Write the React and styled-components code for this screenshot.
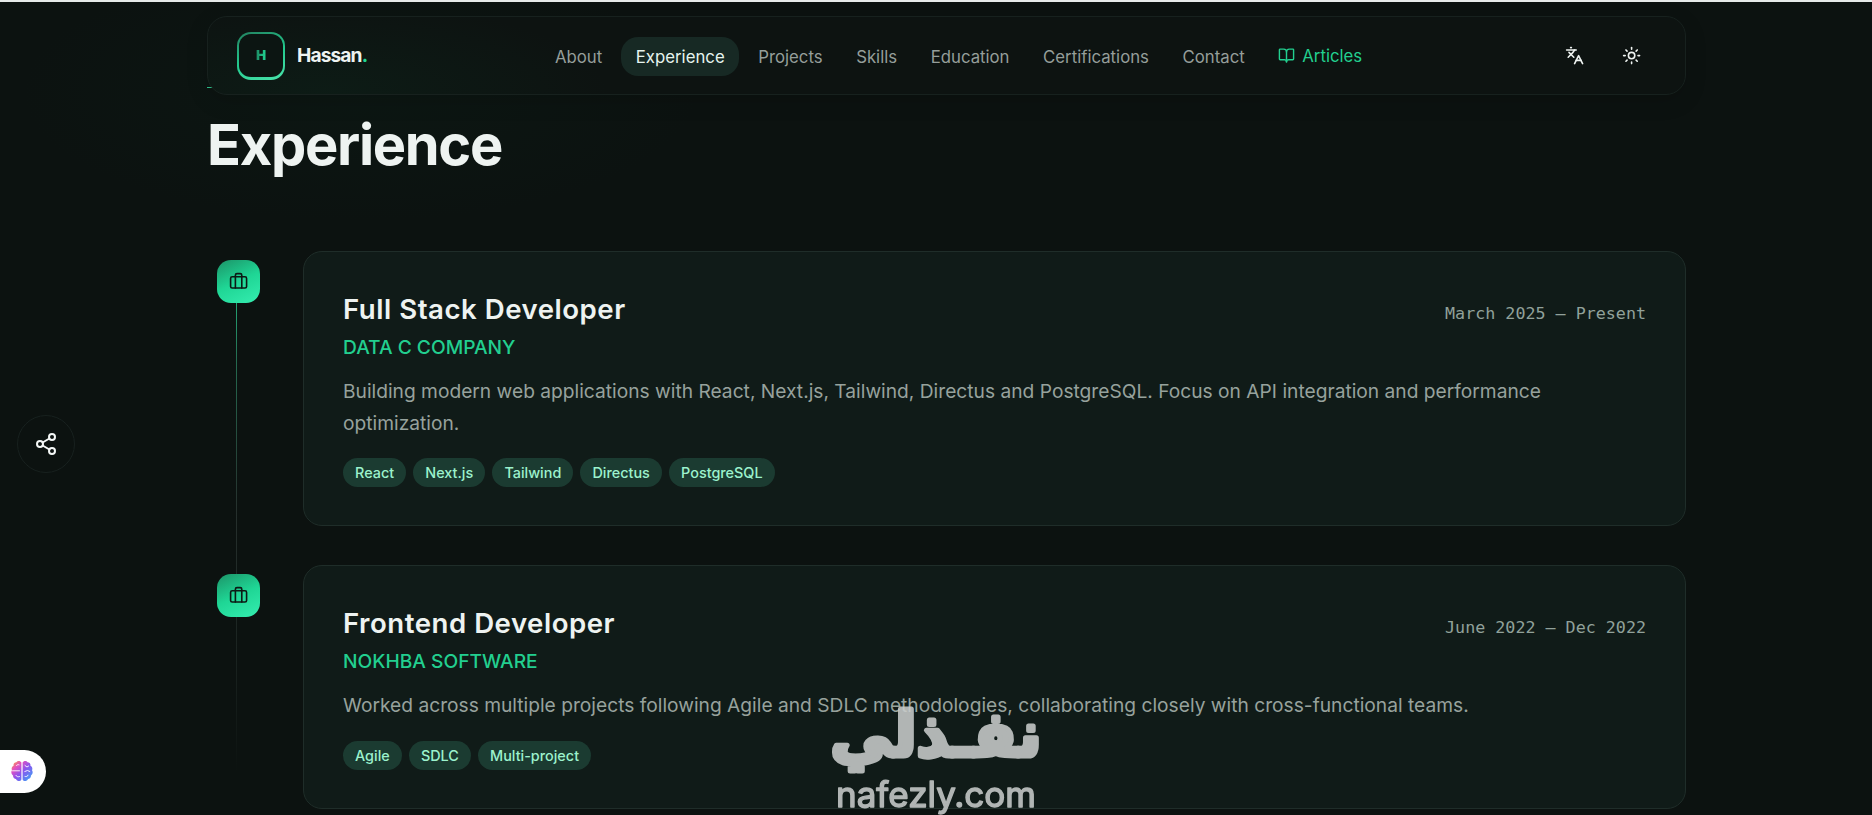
import styled, { createGlobalStyle } from 'styled-components';
import { BookOpen, Briefcase, Languages, Share2, Sun } from 'lucide-react';

const GlobalStyle = createGlobalStyle`
  * {
    box-sizing: border-box;
  }

  body {
    margin: 0;
    background: #0c1210;
    color: #eef3f1;
    font-family: Inter, "Liberation Sans", sans-serif;
    overflow: hidden;
  }

  h1, h2, p {
    margin: 0;
  }
`

const Page = styled.div`
  height: 100vh;
  overflow: hidden;
  border-top: 2px solid #e6eae9;
  background:
    radial-gradient(ellipse 340px 130px at 360px 90px, rgba(12, 50, 34, 0.14), transparent),
    #0c1210;
`

const Container = styled.div`
  width: 1479px;
  margin-left: 207px;
  padding-top: 14px;
`

const Header = styled.header`
  position: relative;
  z-index: 1;
  display: flex;
  align-items: center;
  justify-content: space-between;
  height: 79px;
  padding: 0 29px;
  border: 1px solid #17211e;
  border-radius: 20px;
  background:
    radial-gradient(ellipse 280px 90px at 120px 75px, rgba(12, 54, 36, 0.24), transparent),
    #0d1311;
  box-shadow: 0 6px 22px rgba(0, 0, 0, 0.14);
`

const Brand = styled.div`
  display: flex;
  align-items: center;
  gap: 12px;
`

const Logo = styled.div`
  display: flex;
  align-items: center;
  justify-content: center;
  width: 48px;
  height: 48px;
  border: 2px solid transparent;
  border-bottom-width: 3px;
  border-radius: 14px;
  background:
    linear-gradient(#0c1512, #0c1512) padding-box,
    linear-gradient(160deg, #23805f, #22c98d 50%, #4be3ab) border-box;

  span {
    font-size: 13.5px;
    font-weight: 900;
    line-height: 14px;
    color: transparent;
    background: linear-gradient(90deg, #1d8a63, #20d694);
    background-clip: text;
  }
`

const BrandName = styled.div`
  position: relative;
  top: -1px;
  font-size: 19.2px;
  font-weight: 700;
  letter-spacing: -0.9px;

  span {
    color: #20d694;
  }
`

const Nav = styled.nav`
  display: flex;
  align-items: center;
  gap: 4.8px;
  margin-right: 1px;
`

const NavLink = styled.a`
  display: flex;
  align-items: center;
  gap: 7px;
  height: 39px;
  padding: ${({ $accent }) => ($accent ? '0 14.4px' : '1px 14.4px 0')};
  margin-top: ${({ $accent }) => ($accent ? '0' : '1px')};
  border-radius: 17px;
  font-size: 16.75px;
  color: ${({ $active, $accent }) => ($accent ? '#22cf8f' : $active ? '#e6f4ee' : '#959e9a')};
  background: ${({ $active }) => ($active ? '#172924' : 'transparent')};
`

const Actions = styled.div`
  display: flex;
  gap: 9px;
`

const IconButton = styled.button`
  display: flex;
  align-items: center;
  justify-content: center;
  width: 48px;
  height: 48px;
  padding: 0;
  border: 0;
  background: none;
  color: #eef3f1;
`

const Eyebrow = styled.div`
  width: 29px;
  height: 1px;
  margin-top: -8px;
  background: #2fc48d;
`

const Title = styled.h1`
  margin-top: 25px;
  font-size: 56px;
  font-weight: 700;
  line-height: 64px;
  letter-spacing: -1.3px;
`

// the rail behind the markers is a background strip of the list
const Timeline = styled.div`
  display: flex;
  flex-direction: column;
  gap: 39px;
  margin-top: 74px;
  background: linear-gradient(#22cf8f, #256a50 18%, #26302d 45%, #1b2421 70%, transparent 92%) 29px 10px / 1px 100% no-repeat;
`

const Entry = styled.div`
  display: grid;
  grid-template-columns: 43px 1fr;
  column-gap: 43px;
  padding-left: 10px;
`

const Marker = styled.div`
  display: flex;
  align-items: center;
  justify-content: center;
  width: 43px;
  height: 43px;
  margin-top: 9px;
  border-radius: 14px;
  background: linear-gradient(155deg, #1c9468, #1fd695 50%, #35edb0);
  color: #0d1a15;
`

const Card = styled.article`
  padding: 39px 39px 38px;
  border: 1px solid #1f2d29;
  border-radius: 19px;
  background: #101b18;
`

const CardHead = styled.div`
  display: flex;
  align-items: center;
  justify-content: space-between;
`

const Role = styled.h2`
  font-size: 27.6px;
  font-weight: 600;
  line-height: 36px;
  letter-spacing: 0.52px;
`

const Period = styled.div`
  padding-top: 8px;
  font-family: "DejaVu Sans Mono", "Liberation Mono", monospace;
  font-size: 16.7px;
  line-height: 24px;
  color: #91a19a;
`

const Company = styled.div`
  margin-top: 6px;
  font-size: 19.2px;
  font-weight: 500;
  line-height: 29px;
  color: #22cf8f;
`

const Summary = styled.p`
  margin-top: 14px;
  font-size: 19.2px;
  line-height: 31.68px;
  color: #97a29d;
`

const Tags = styled.div`
  display: flex;
  gap: 7.2px;
  margin-top: 19px;
`

const Tag = styled.span`
  padding: 0 12px;
  border-radius: 15px;
  font-size: 14.4px;
  font-weight: 500;
  line-height: 29px;
  color: #9cf2cd;
  background: #1b3b31;
`

const ShareButton = styled.button`
  position: fixed;
  left: 17px;
  top: 415px;
  display: flex;
  align-items: center;
  justify-content: center;
  width: 58px;
  height: 58px;
  padding: 0;
  border: 1px solid #18211f;
  border-radius: 50%;
  background: #0c1210;
  color: #f4f7f6;
`

const BrainTab = styled.div`
  position: fixed;
  left: 0;
  top: 750px;
  display: flex;
  align-items: center;
  width: 46px;
  height: 43px;
  padding: 0 0 1px 11px;
  border-radius: 0 22px 22px 0;
  background: #fff;
`

const Watermark = styled.div`
  position: fixed;
  left: 816px;
  top: 690px;
  width: 240px;
  height: 125px;
  opacity: 0.87;

  svg {
    display: block;
  }

  text {
    fill: #c9cdcc;
    stroke: #c9cdcc;
    stroke-linejoin: round;
  }

  .arabic {
    font: 700 62px "DejaVu Sans", sans-serif;
    stroke-width: 5px;
  }

  .latin {
    font: 400 35px Inter, sans-serif;
    stroke-width: 1.4px;
  }
`

const links = ['About', 'Experience', 'Projects', 'Skills', 'Education', 'Certifications', 'Contact'];

const jobs = [
  {
    role: 'Full Stack Developer',
    company: 'DATA C COMPANY',
    period: 'March 2025 – Present',
    summary: 'Building modern web applications with React, Next.js, Tailwind, Directus and PostgreSQL. Focus on API integration and performance optimization.',
    tags: ['React', 'Next.js', 'Tailwind', 'Directus', 'PostgreSQL'],
  },
  {
    role: 'Frontend Developer',
    company: 'NOKHBA SOFTWARE',
    period: 'June 2022 – Dec 2022',
    summary: 'Worked across multiple projects following Agile and SDLC methodologies, collaborating closely with cross-functional teams.',
    tags: ['Agile', 'SDLC', 'Multi-project'],
  },
];

function BrainIcon() {
  return (
    <svg width="22" height="22" viewBox="0 0 22 22" fill="none">
      <defs>
        <linearGradient id="brain" x1="2" y1="1" x2="20" y2="20" gradientUnits="userSpaceOnUse">
          <stop offset="0" stopColor="#f9a03c" />
          <stop offset="0.25" stopColor="#e44fc0" />
          <stop offset="0.55" stopColor="#8a55ee" />
          <stop offset="1" stopColor="#3fa2f4" />
        </linearGradient>
      </defs>
      <path
        fill="url(#brain)"
        d="M10.4 2.6C9.6.6 6.6.3 5.4 2.2 3.4 2.2 2.2 4 2.6 5.8.8 6.8.2 8.6 1 10.2-.2 12 .3 14.4 2 15.4 2 17.4 3.4 18.8 5 19 6 21.5 9.4 21.8 10.4 19.4zM11.6 2.6C12.4.6 15.4.3 16.6 2.2 18.6 2.2 19.8 4 19.4 5.8 21.2 6.8 21.8 8.6 21 10.2 22.2 12 21.7 14.4 20 15.4 20 17.4 18.6 18.8 17 19 16 21.5 12.6 21.8 11.6 19.4z"
      />
      <path
        stroke="#fff"
        strokeWidth="0.9"
        strokeLinecap="round"
        d="M5.5 5.5C6 4.5 7 4.5 8 4.8M1.5 10.8H8.5M5 15.5C5.5 16.8 7 17 8.4 16.6M14 5.5 16 7 17.6 6M13.8 11.5 16.5 10.5 18.8 11.5M14 16.5C15 16.8 16.8 16.6 17 15.2"
      />
    </svg>
  );
}

function App() {
  return (
    <Page>
      <GlobalStyle />
      <Container>
        <Header>
          <Brand>
            <Logo><span>H</span></Logo>
            <BrandName>Hassan<span>.</span></BrandName>
          </Brand>
          <Nav>
            {links.map((link) => (
              <NavLink key={link} $active={link === 'Experience'}>{link}</NavLink>
            ))}
            <NavLink $accent>
              <BookOpen size={17} />
              Articles
            </NavLink>
          </Nav>
          <Actions>
            <IconButton><Languages size={19.2} /></IconButton>
            <IconButton><Sun size={19.2} /></IconButton>
          </Actions>
        </Header>

        <Eyebrow />
        <Title>Experience</Title>

        <Timeline>
          {jobs.map((job) => (
            <Entry key={job.role}>
              <Marker><Briefcase size={19.2} /></Marker>
              <Card>
                <CardHead>
                  <Role>{job.role}</Role>
                  <Period>{job.period}</Period>
                </CardHead>
                <Company>{job.company}</Company>
                <Summary>{job.summary}</Summary>
                <Tags>
                  {job.tags.map((tag) => <Tag key={tag}>{tag}</Tag>)}
                </Tags>
              </Card>
            </Entry>
          ))}
        </Timeline>
      </Container>

      <ShareButton><Share2 size={24} /></ShareButton>
      <BrainTab><BrainIcon /></BrainTab>
      <Watermark>
        <svg width="240" height="125">
          <text className="arabic" x="120" y="66" textAnchor="middle" direction="rtl">نفـذلي</text>
          <text className="latin" x="120" y="117" textAnchor="middle">nafezly.com</text>
        </svg>
      </Watermark>
    </Page>
  );
}

export default App;
